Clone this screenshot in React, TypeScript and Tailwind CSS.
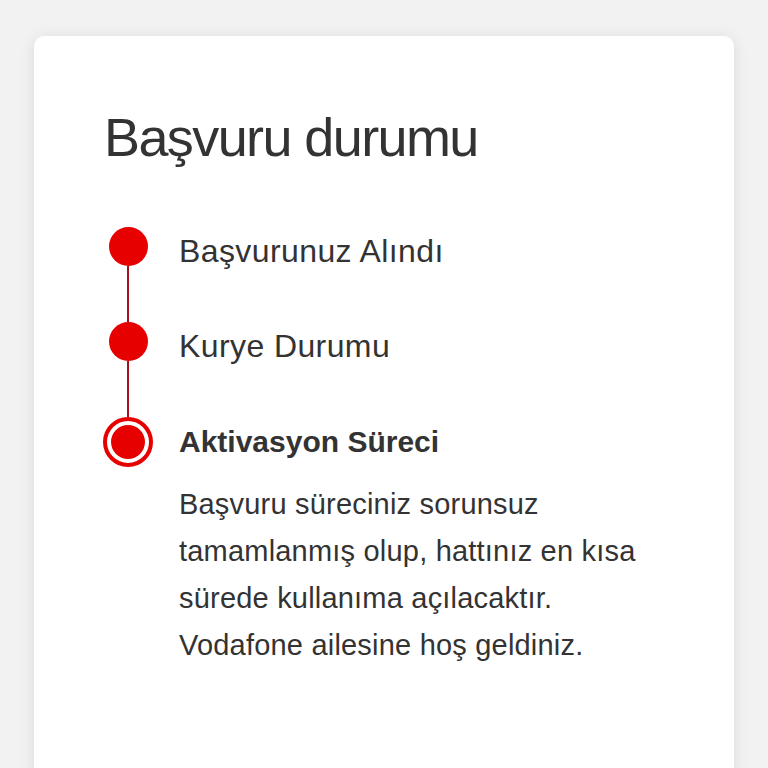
import React from 'react'

type Step = {
  title: string
  active?: boolean
}

const steps: Step[] = [
  { title: 'Başvurunuz Alındı' },
  { title: 'Kurye Durumu' },
  { title: 'Aktivasyon Süreci', active: true },
]

const bodyLines = [
  'Başvuru süreciniz sorunsuz',
  'tamamlanmış olup, hattınız en kısa',
  'sürede kullanıma açılacaktır.',
  'Vodafone ailesine hoş geldiniz.',
]

export default function App() {
  return (
    <div className="h-[768px] overflow-hidden bg-[#f2f2f2] px-[34px] pt-[36px] font-['Liberation_Sans',Arial,sans-serif] text-[#333333]">
      <div className="h-[800px] rounded-[10px] bg-white pl-[68px] pt-[71px] shadow-[0_2px_16px_rgba(0,0,0,0.10)]">
        <h1 className="pl-[2px] text-[54px] font-normal leading-[60px] tracking-[-1.6px]">
          Başvuru durumu
        </h1>

        <div className="mt-[60px] flex flex-col">
          {/* Step 1 & 2: filled dot with line down to next step */}
          {steps.slice(0, 2).map((step) => (
            <div key={step.title} className="flex h-[95px]">
              <div className="flex w-[52px] flex-col items-center">
                <div className="h-[39px] w-[39px] shrink-0 rounded-full bg-[#e60000]" />
                <div className="w-[2px] flex-1 bg-[#a8101a]" />
              </div>
              <div className="ml-[25px] pt-[3px] text-[32px] leading-[42px] tracking-[0.4px]">{step.title}</div>
            </div>
          ))}

          {/* Step 3: current step */}
          <div className="flex">
            <div className="flex w-[52px] shrink-0 justify-center">
              <div className="h-[50px] w-[50px] rounded-full border-[4px] border-[#e60000] bg-white p-[4px]">
                <div className="h-full w-full rounded-full bg-[#e60000]" />
              </div>
            </div>
            <div className="ml-[25px]">
              <div className="pt-[2px] text-[30px] font-bold leading-[45px]">
                {steps[2].title}
              </div>
              <p className="mt-[17px] text-[29px] leading-[47px] tracking-[0.2px]">
                {bodyLines.map((line) => (
                  <span key={line} className="block">
                    {line}
                  </span>
                ))}
              </p>
            </div>
          </div>
        </div>
      </div>
    </div>
  )
}
